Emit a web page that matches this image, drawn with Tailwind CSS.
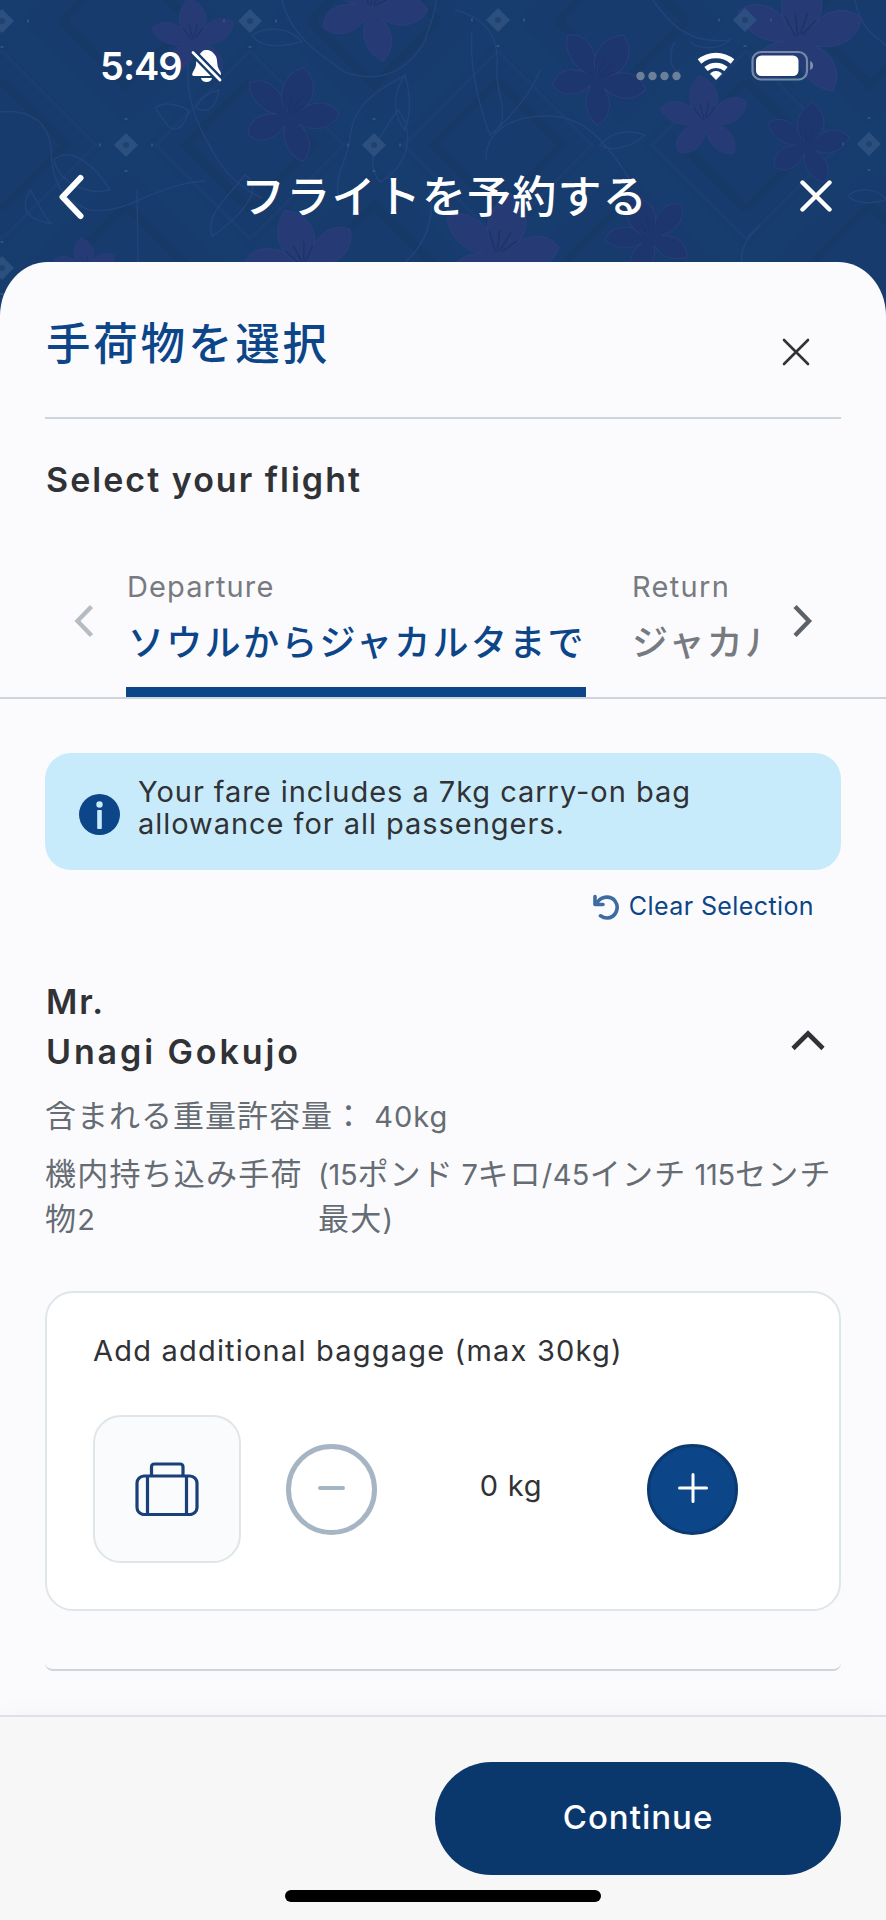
<!DOCTYPE html>
<html lang="ja">
<head>
<meta charset="utf-8">
<title>フライトを予約する</title>
<script src="https://cdn.jsdelivr.net/npm/@tailwindcss/browser@4"></script>
</head>
<body class="relative flex h-[1920px] w-[886px] flex-col overflow-hidden bg-[#173b6c] font-['Inter','Noto_Sans_CJK_JP',sans-serif] text-[#303235]">

<!-- batik backdrop -->
<svg class="absolute left-0 top-0" width="886" height="330" viewBox="0 0 886 330" fill="none">
  <defs>
    <pattern id="weave" width="248" height="248" patternUnits="userSpaceOnUse" x="2" y="21">
      <path d="M0 0L124 124L248 0M0 248L124 124L248 248" stroke="#15406f" stroke-width="26" opacity=".4"/>
      <path d="M0 60L64 124L0 188M248 60L184 124L248 188M60 0L124 64L188 0M60 248L124 184L188 248" stroke="#163562" stroke-width="9" opacity=".3"/>
      <path d="M0 30L94 124L0 218M248 30L154 124L248 218" stroke="#1b4374" stroke-width="3" opacity=".4"/>
    </pattern>
    <g id="bloom">
      <path d="M0 2C-20-8-26-34-6-54C16-46 24-26 12-8C20-24 38-32 54-22C54-2 36 10 16 8C34 14 44 28 38 46C18 46 6 34 2 16C0 34-14 48-32 44C-40 28-30 14-12 8C-30 12-48 4-56-12C-42-28-18-22 0 2Z"/>
      <path d="M0 2L-5-18M2 0L6-20M-2 2L-14-14M4 0L14-14" stroke="#1d3468" stroke-width="1.6"/>
    </g>
    <g id="gem">
      <path d="M0-12L12 0L0 12L-12 0Z" fill="#2f5283" opacity=".85"/><circle r="3" fill="#21426f"/>
      <path d="M0-27V-25M0 25V27M-27 0H-25M25 0H27" stroke="#2f5283" stroke-width="3"/>
    </g>
  </defs>
  <rect width="886" height="330" fill="url(#weave)"/>
  <g stroke="#28477f" stroke-width="1.5" opacity=".7">
    <path d="M189 55C184 90 194 120 212 150C225 175 245 190 262 198M0 112C32 108 50 125 51 150C52 180 60 200 90 210C130 215 150 185 205 181M155 108C165 100 185 106 189 112C182 130 176 132 168 126ZM196 108C200 96 210 92 219 90C216 108 208 114 196 108Z"/>
    <path d="M282 0C290 35 320 55 345 72C380 85 410 70 425 40C430 25 436 10 436 0M405 75C375 92 352 105 350 140C345 165 335 175 338 195M252 35C270 25 290 28 302 42C285 46 262 50 252 35ZM405 75C395 90 390 110 405 130C412 110 410 92 405 75Z"/>
    <path d="M455 10C485 18 500 35 497 70C495 95 515 120 490 135C475 95 470 60 472 32M486 160C485 130 515 112 560 117C590 122 612 150 630 180M540 70C535 85 515 115 490 135M600 145C612 130 632 130 645 135C630 148 612 152 600 145Z"/>
    <path d="M653 0C670 25 690 45 730 40C720 50 700 50 690 42M675 42C665 60 675 75 680 70M855 0C860 30 880 40 886 45M848 196C860 185 880 190 886 200C870 205 855 203 848 196Z"/>
    <path d="M54 160C70 145 95 165 110 190C90 195 60 185 54 160ZM30 190C40 205 45 220 52 224C30 220 18 212 30 190ZM245 175C262 185 250 210 212 236C205 215 225 200 245 175ZM398 110C415 130 410 165 380 182C362 160 380 135 398 110ZM137 190L138 262M430 190C435 220 425 245 405 262M760 225C745 240 740 250 742 262"/>
  </g>
  <g stroke="#293e7c" stroke-width="1.2">
    <g fill="#263b76">
      <use href="#bloom" transform="translate(193 38) scale(.74)"/>
      <use href="#bloom" transform="translate(371 4) rotate(28) scale(.98)"/>
      <use href="#bloom" transform="translate(798 34) rotate(8) scale(1.12)"/>
      <use href="#bloom" transform="translate(704 118) scale(.78)"/>
      <use href="#bloom" transform="translate(302 262) rotate(-12)"/>
      <use href="#bloom" transform="translate(498 250) rotate(20) scale(1.05)"/>
      <use href="#bloom" transform="translate(84 268) scale(.56)"/>
    </g>
    <g fill="#1e366e">
      <use href="#bloom" transform="translate(289 112) rotate(24) scale(.86)"/>
      <use href="#bloom" transform="translate(598 74) rotate(40) scale(.86)"/>
      <use href="#bloom" transform="translate(806 142) rotate(15) scale(.74)"/>
      <use href="#bloom" transform="translate(648 234) rotate(-20) scale(.76)"/>
    </g>
  </g>
  <use href="#gem" x="2" y="21"/><use href="#gem" x="250" y="21"/><use href="#gem" x="498" y="20"/><use href="#gem" x="745" y="20"/>
  <use href="#gem" x="126" y="145"/><use href="#gem" x="374" y="145"/><use href="#gem" x="869" y="144"/><use href="#gem" x="2" y="268"/>
</svg>

<!-- status bar -->
<div class="relative flex h-[132px] items-center justify-between pl-[100px] pr-[71px]">
  <div class="flex items-center gap-[9px]">
    <span class="text-[38px] font-semibold leading-none tracking-[-1px] text-white">5:49</span>
    <svg width="32" height="34" viewBox="0 0 32 34" fill="#fff">
      <path d="M15.500 1C20 1 22 3.500 24 6C26 8 26 12 26.500 16C27 20 29.500 21.500 30 24.500C30 26 29 27 28 27H3C1.500 27 1 26 1.200 25C2 21.500 4.500 20 5 16C5.300 11 6 7 9 5C11 2.500 12 1 15.500 1Z"/>
      <path d="M10 29H21C20.500 31.500 18.500 33 15.500 33C12.500 33 10.500 31.500 10 29Z"/>
      <path d="M1.500 3L29.500 31.500" stroke="#183b6d" stroke-width="7.500"/>
      <path d="M2 3.500L29 31" stroke="#fff" stroke-width="2.800" stroke-linecap="round"/>
    </svg>
  </div>
  <svg width="180" height="34" viewBox="634 49 180 34" fill="none">
    <g fill="#6c8199"><circle cx="639.500" cy="76" r="4.200"/><circle cx="651.500" cy="76" r="4.200"/><circle cx="663.500" cy="76" r="4.200"/><circle cx="675.500" cy="76" r="4.200"/></g>
    <path d="M698.500 61.500A25.500 25.500 0 0 1 731.500 61.500" stroke="#fff" stroke-width="5.600"/>
    <path d="M705 69A15.500 15.500 0 0 1 725 69" stroke="#fff" stroke-width="5.200"/>
    <path d="M715 79.500L709.500 73.800C712.500 70.700 717.500 70.700 720.500 73.800Z" fill="#fff" stroke="#fff" stroke-width="1" stroke-linejoin="round"/>
    <rect x="751.500" y="52" width="54.500" height="27.500" rx="8.500" stroke="#748aa5" stroke-width="2.200"/>
    <rect x="755" y="55.500" width="42.500" height="20.500" rx="5.500" fill="#fff"/>
    <path d="M809.200 61C813 62 813 69 809.200 70Z" fill="#8093ac"/>
  </svg>
</div>

<!-- navigation bar -->
<div class="relative flex h-[130px] items-center justify-between pl-[55px] pr-[54px]">
  <svg width="34" height="46" viewBox="0 0 34 46" fill="none" stroke="#fff" stroke-width="6" stroke-linecap="round" stroke-linejoin="round"><path d="M25.500 4L7.500 23L25.500 42"/></svg>
  <h1 class="pb-[7px] font-['Noto_Sans_CJK_JP',sans-serif] text-[44px] font-medium leading-[60px] tracking-[1.2px] text-white">フライトを予約する</h1>
  <svg class="mb-[2px]" width="32" height="32" viewBox="0 0 32 32" fill="none" stroke="#fff" stroke-width="4.400" stroke-linecap="round"><path d="M2.500 2.500L29.500 29.500M29.500 2.500L2.500 29.500"/></svg>
</div>

<!-- sheet -->
<main class="relative flex grow flex-col bg-[#fbfbfe] [border-radius:48px_48px_0_0/54px_54px_0_0]">
  <div class="mx-[45px] flex h-[157px] items-start justify-between border-b-2 border-[#ccd5db] pr-[31px] pt-[54px]">
    <h2 class="pl-[1px] font-['Noto_Sans_CJK_JP',sans-serif] text-[44.500px] font-medium leading-[50px] tracking-[2.800px] text-[#0c4588]">手荷物を選択</h2>
    <svg class="mt-[22px]" width="28" height="28" viewBox="0 0 28 28" fill="none" stroke="#303235" stroke-width="2.600" stroke-linecap="round"><path d="M2 2L26 26M26 2L2 26"/></svg>
  </div>

  <h3 class="pl-[46px] pt-[1px] text-[34px] font-[560] leading-[119px] tracking-[2.020px]">Select your flight</h3>

  <div class="flex h-[160px] border-b-2 border-[#ccd5db]">
    <svg class="ml-[74px] mt-[66px] shrink-0" width="20" height="32" viewBox="0 0 20 32" fill="none" stroke="#b6bcc1" stroke-width="4.400"><path d="M17.500 1.500L3.500 16L17.500 30.500"/></svg>
    <div class="ml-[32px] flex w-[636px] gap-[44px] overflow-hidden whitespace-nowrap pt-[28px]">
      <div class="flex w-[460px] shrink-0 flex-col">
        <span class="pl-[1px] text-[29px] leading-[40px] tracking-[1.100px] text-[#777a80]">Departure</span>
        <span class="mt-[12px] pl-[2px] text-[36px] font-medium leading-[48px] tracking-[2.300px] text-[#0c4588]">ソウルからジャカルタまで</span>
        <span class="mt-[20px] h-[10px] bg-[#0c4588]"></span>
      </div>
      <div class="flex shrink-0 flex-col">
        <span class="pl-[2px] text-[29px] leading-[40px] tracking-[1.300px] text-[#777a80]">Return</span>
        <span class="mt-[12px] pl-[2px] text-[36px] font-medium leading-[48px] tracking-[2.300px] text-[#777a80]">ジャカル</span>
      </div>
    </div>
    <svg class="ml-[31px] mt-[66px] shrink-0" width="20" height="32" viewBox="0 0 20 32" fill="none" stroke="#5d6268" stroke-width="4.400"><path d="M2 1.500L16 16L2 30.500"/></svg>
  </div>

  <div class="mx-[45px] mt-[54px] flex h-[117px] rounded-[26px] bg-[#c8ebfb]">
    <svg class="ml-[34px] mt-[41px]" width="41" height="41" viewBox="0 0 41 41"><circle cx="20.500" cy="20.500" r="20.500" fill="#0c4588"/><circle cx="20.500" cy="10.500" r="3.200" fill="#c8ebfb"/><rect x="18.200" y="16" width="4.600" height="19" rx=".8" fill="#c8ebfb"/></svg>
    <p class="ml-[18px] pt-[23px] text-[29px] leading-[31.500px] tracking-[0.960px]">Your fare includes a 7kg carry-on bag<br>allowance for all passengers.</p>
  </div>

  <div class="mt-[18px] flex h-[36px] items-center justify-end pr-[72px] text-[#0c4588]">
    <svg class="mr-[9px] mt-[3px]" width="28" height="28" viewBox="0 0 28 28" fill="none" stroke="#3d6ba2" stroke-width="3.600" stroke-linecap="round" stroke-linejoin="round"><path d="M3 2.500V10.500H11"/><path d="M4 9.500L6 7.500C10 2 19 1.500 23 7C28 14 23.500 24 15 24C12.500 24 10.500 23.200 8.500 21.800"/></svg>
    <span class="text-[25px] leading-[36px] tracking-[0.400px]">Clear Selection</span>
  </div>

  <div class="mt-[53px] flex items-center justify-between pl-[46px] pr-[61px]">
    <div class="text-[34px] font-[560] leading-[50px]">
      <div class="tracking-[1.800px]">Mr.</div>
      <div class="tracking-[2.900px]">Unagi Gokujo</div>
    </div>
    <svg class="mt-[27px]" width="34" height="21" viewBox="0 0 34 21" fill="none" stroke="#303235" stroke-width="4.600"><path d="M2 18.500L17 3.500L32 18.500"/></svg>
  </div>

  <p class="mt-[16px] h-[46px] whitespace-pre pl-[45px] text-[31px] leading-[46px] tracking-[1px] text-[#666c73]">含まれる重量許容量：<span class="text-[29px]"> 40kg</span></p>

  <div class="mt-[12px] flex h-[91px] pl-[45px] text-[31px] leading-[45px] tracking-[1.200px] text-[#666c73]">
    <div class="w-[273px]">機内持ち込み手荷<br>物<span class="text-[29px] leading-none">2</span></div>
    <div class="whitespace-nowrap"><span class="text-[29px] leading-none tracking-[-0.200px]">(15</span>ポンド<span class="text-[29px] leading-none tracking-[-0.600px]"> 7</span>キロ<span class="text-[29px] leading-none tracking-[0.400px]">/45</span>インチ<span class="text-[29px] leading-none tracking-[-0.200px]"> 115</span>センチ<br>最大<span class="text-[29px] leading-none">)</span></div>
  </div>

  <section class="mx-[45px] mt-[49px] h-[320px] rounded-[28px] border-2 border-[#dfe6e9] bg-white pl-[46px] pt-[38px]">
    <p class="text-[29px] leading-[40px] tracking-[1.200px]">Add additional baggage (max 30kg)</p>
    <div class="mt-[44px] flex items-center">
      <div class="flex size-[148px] items-center justify-center rounded-[28px] border-2 border-[#dfe6e9] bg-[#fafbfd]">
        <svg width="64" height="54" viewBox="0 0 64 54" fill="none" stroke="#1a4079" stroke-width="3.200"><rect x="2" y="14" width="60" height="38.500" rx="7"/><path d="M12.500 14V52M51.500 14V52M16.500 14V5Q16.500 2 19.500 2H45Q48 2 48 5V14"/></svg>
      </div>
      <div class="ml-[45px] flex size-[91px] items-center justify-center rounded-full border-[5px] border-[#a6b5c3] pb-[2px]"><span class="h-[4px] w-[27px] rounded-full bg-[#a6b5c3]"></span></div>
      <div class="w-[270px] pb-[6px] pr-[2px] text-center text-[29px] leading-[40px] tracking-[0.700px]">0 kg</div>
      <div class="flex size-[91px] items-center justify-center rounded-full border-[3px] border-[#0b3a70] bg-[#0c4588] pb-[2px]">
        <svg width="32" height="32" viewBox="0 0 32 32" stroke="#fff" stroke-width="3" stroke-linecap="round"><path d="M2.500 16H29.500M16 2.500V29.500"/></svg>
      </div>
    </div>
  </section>
  <div class="mx-[45px] h-[60px] rounded-b-[8px] border-b-2 border-[#ccd5db]"></div>

  <!-- footer -->
  <footer class="mt-[44px] flex grow flex-col border-t-2 border-[#dbe1e6] bg-[#f7f7f7] pt-[45px] shadow-[0_-2px_24px_rgba(0,0,0,0.03)]">
    <button class="mr-[45px] h-[113px] w-[406px] self-end rounded-full bg-[#0a386d] pb-[1px] text-[33px] font-medium tracking-[1px] text-white">Continue</button>
    <div class="mt-[15px] h-[12px] w-[316px] self-center rounded-full bg-black"></div>
  </footer>
</main>
</body>
</html>
